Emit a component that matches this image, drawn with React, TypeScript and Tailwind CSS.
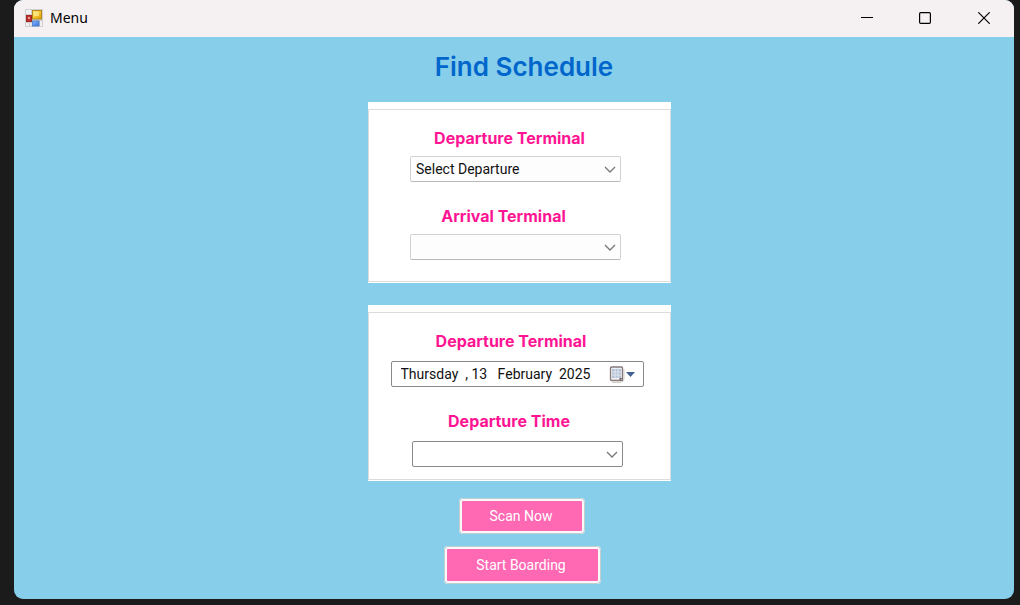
import { useId } from "react";

function AppIcon() {
  return (
    <svg width="18" height="18" viewBox="0 0 18 18" aria-hidden="true">
      <defs>
        <linearGradient id="gold" x1="0" y1="0" x2="1" y2="1">
          <stop offset="0" stopColor="#fde98a" />
          <stop offset="0.5" stopColor="#f6c52c" />
          <stop offset="1" stopColor="#d99a06" />
        </linearGradient>
        <linearGradient id="blue" x1="0" y1="0" x2="1" y2="1">
          <stop offset="0" stopColor="#8fb8f5" />
          <stop offset="1" stopColor="#2f6fdc" />
        </linearGradient>
      </defs>
      <rect width="18" height="18" fill="#cfcfd1" />
      <rect x="1" y="1" width="5" height="4" fill="#f1f1f3" />
      <rect x="1" y="14" width="3" height="3" fill="#f1f1f3" />
      <rect x="5" y="14" width="1.5" height="3" fill="#f1f1f3" />
      <rect x="15" y="12" width="2" height="5" fill="#f1f1f3" />
      <rect x="7.5" y="1.5" width="9" height="8.5" fill="url(#gold)" stroke="#b78a1c" />
      <rect x="9" y="3" width="5" height="4" fill="#fdf0a8" opacity="0.6" />
      <rect x="1.5" y="6.5" width="5" height="6" fill="#c3302c" stroke="#a02824" />
      <rect x="3" y="8" width="2" height="2" fill="#ee9a94" />
      <rect x="7.5" y="12" width="6.5" height="5" fill="url(#blue)" stroke="#5583cf" />
    </svg>
  );
}

function CalendarIcon() {
  return (
    <svg width="27" height="18" viewBox="0 0 27 18" aria-hidden="true">
      <path d="M3 17.5h9l3-3V4" fill="none" stroke="#d3cecc" />
      <path d="M2.500 2h10a1 1 0 0 1 1 1v12.500h-11a1 1 0 0 1-1-1v-11.500a1 1 0 0 1 1-1z" fill="#f0f0f4" stroke="#85797a" strokeWidth="1.300" />
      <rect x="3" y="4" width="9" height="9" fill="#b4c1d6" />
      <path d="M3 7h9M3 10h9M6 4v9M9 4v9" stroke="#e9eef6" strokeWidth="0.800" />
      <path d="M10.500 16v-3h3z" fill="#6e6263" />
      <path d="M17 7h9l-4.500 5z" fill="#41608f" />
    </svg>
  );
}

type PickerProps = {
  label: string;
  options: string[];
  labelInset: string;
  gap: string;
  box: string;
};

function Picker({ label, options, labelInset, gap, box }: PickerProps) {
  const id = useId();
  return (
    <div className={`flex flex-col items-center ${gap}`}>
      <label
        htmlFor={id}
        className={`font-[Inter,sans-serif] text-[16px] leading-5 font-bold text-[#ff1493] ${labelInset}`}
      >
        {label}
      </label>
      <div className="relative w-[211px]">
        <select
          id={id}
          className={`block h-[26px] w-full appearance-none rounded-[2px] border pl-[5px] pr-6 font-[Roboto,sans-serif] text-[14px] text-[#111] ${box}`}
        >
          {options.map((option) => (
            <option key={option}>{option}</option>
          ))}
        </select>
        <svg
          className="pointer-events-none absolute top-[10px] right-[5px]"
          width="12"
          height="8"
          viewBox="0 0 12 8"
          fill="none"
          stroke="#777"
          strokeWidth="1.300"
          aria-hidden="true"
        >
          <path d="M1 1l5 5 5-5" />
        </svg>
      </div>
    </div>
  );
}

const paleBox = "border-[#d2d2d2] border-b-[#b9b9b9] bg-[#fdfdfd]";
const darkBox = "border-[#8a8a8a] bg-white";

export default function App() {
  return (
    <div className="flex min-h-screen bg-[#1c1b1b] pr-[6px] pb-[6px] pl-[14px]">
      <div className="flex flex-1 flex-col overflow-hidden rounded-[9px] bg-[#87ceeb]">
        <header className="flex h-[37px] items-center bg-[#f5f1f3] pb-[2px] pl-[11px]">
          <AppIcon />
          <span className="ml-[7px] flex-1 font-['Noto_Sans',sans-serif] text-[14px] text-black">Menu</span>
          <div className="flex h-full">
            <button type="button" aria-label="Minimize" className="flex w-[58px] items-center justify-center">
              <svg width="12" height="12" viewBox="0 0 12 12" stroke="#000">
                <path d="M0 5.500h12" />
              </svg>
            </button>
            <button type="button" aria-label="Maximize" className="flex w-[58px] items-center justify-center">
              <svg width="12" height="12" viewBox="0 0 12 12" fill="none" stroke="#000" strokeWidth="1.200">
                <rect x="0.600" y="0.600" width="10.800" height="10.800" rx="1.200" />
              </svg>
            </button>
            <button type="button" aria-label="Close" className="flex w-[60px] items-center justify-center">
              <svg width="12" height="12" viewBox="0 0 12 12" stroke="#000" strokeWidth="1.200">
                <path d="M0.300 0.300l11.400 11.400M11.700 0.300L0.300 11.700" />
              </svg>
            </button>
          </div>
        </header>

        <main className="flex flex-col items-center pt-[14px] pb-[15px] pl-[11px]">
          <h1 className="pl-[9px] font-[Inter,sans-serif] text-[26px] leading-8 font-semibold text-[#0066cc]">
            Find Schedule
          </h1>

          <section className="mt-[19px] w-[303px] bg-white pt-[7px] pb-px">
            <div className="flex flex-col gap-6 border border-[#dcdcdc] pt-[18px] pr-2 pb-[21px]">
              <Picker
                label="Departure Terminal"
                options={["Select Departure"]}
                labelInset="pr-3"
                gap="gap-2"
                box={paleBox}
              />
              <Picker label="Arrival Terminal" options={[""]} labelInset="pr-6" gap="gap-2" box={paleBox} />
            </div>
          </section>

          <section className="mt-[22px] w-[303px] bg-white pt-[7px] pb-px">
            <div className="flex flex-col gap-6 border border-[#dcdcdc] pt-[18px] pr-[5px] pb-3">
              <div className="flex flex-col items-center gap-[10px]">
                <label
                  htmlFor="departure-date"
                  className="pr-3 font-[Inter,sans-serif] text-[16px] leading-5 font-bold text-[#ff1493]"
                >
                  Departure Terminal
                </label>
                <div className="flex h-[26px] w-[253px] items-center rounded-[2px] border border-[#8a8a8a] bg-white pr-[7px] pl-[9px]">
                  <input
                    id="departure-date"
                    type="text"
                    defaultValue="Thursday  , 13   February  2025"
                    className="min-w-0 flex-1 bg-transparent font-[Roboto,sans-serif] text-[14px] text-[#111] outline-none"
                  />
                  <button type="button" aria-label="Open calendar">
                    <CalendarIcon />
                  </button>
                </div>
              </div>
              <Picker label="Departure Time" options={[""]} labelInset="pr-4" gap="gap-[10px]" box={darkBox} />
            </div>
          </section>

          <div className="mt-[17px] flex flex-col items-center gap-3 pl-[5px] font-[Roboto,sans-serif] text-[14px] text-white">
            <button
              type="button"
              className="h-9 w-[126px] rounded-[4px] border-[3px] border-[#f8f8f8] bg-[#ff69b4] pr-[2px] outline outline-1 -outline-offset-1 outline-[#c4cdd0]"
            >
              Scan Now
            </button>
            <button
              type="button"
              className="h-[38px] w-[157px] rounded-[4px] border-[3px] border-[#f8f8f8] bg-[#ff69b4] pr-[2px] outline outline-1 -outline-offset-1 outline-[#c4cdd0]"
            >
              Start Boarding
            </button>
          </div>
        </main>
      </div>
    </div>
  );
}
